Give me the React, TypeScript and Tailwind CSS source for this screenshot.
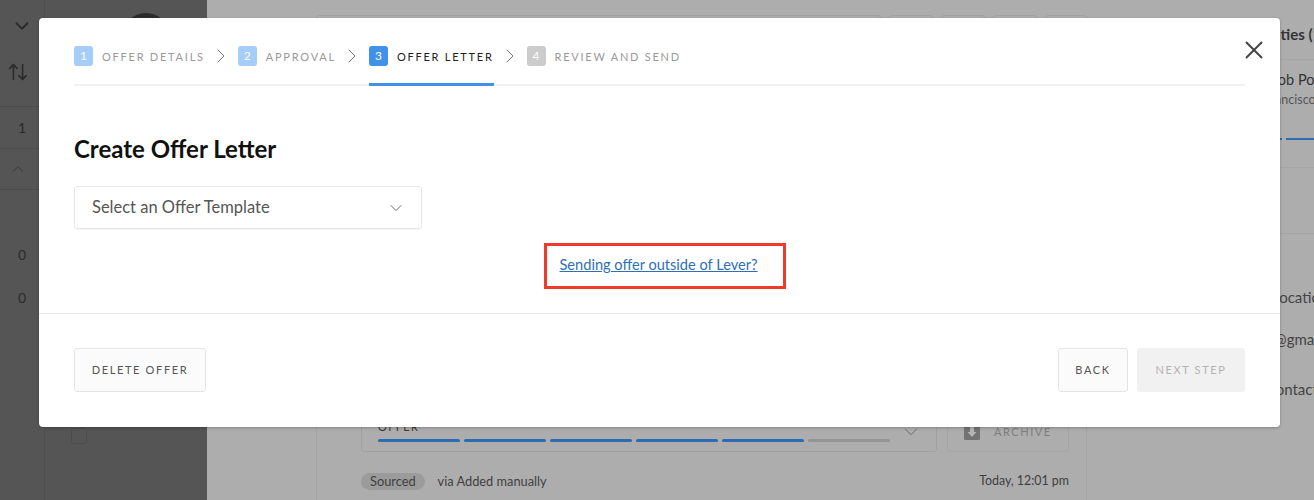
import { ArrowUpDown, ChevronDown, ChevronRight, ChevronUp, X } from 'lucide-react'

const STEPS = [
  { n: 1, label: 'Offer details', badge: 'bg-[#a5cdf9] text-white', text: 'text-[#999]' },
  { n: 2, label: 'Approval', badge: 'bg-[#a5cdf9] text-white', text: 'text-[#999]' },
  { n: 3, label: 'Offer letter', badge: 'bg-[#4190ea] text-white', text: 'text-[#222]', active: true },
  { n: 4, label: 'Review and send', badge: 'bg-[#cccccc] text-white', text: 'text-[#999]' },
]

function LeftRail() {
  return (
    <div className="flex w-[207px] flex-none bg-[#555555] text-[#2b2b2b]">
      <div className="flex w-[45px] flex-none flex-col border-r border-[#4f4f4f]">
        <div className="flex h-[50px] items-start justify-center pt-[15px] pl-0">
          <ChevronDown size={22} strokeWidth={2} />
        </div>
        <div className="flex h-[57px] items-start border-b border-[#4d4d4d] pt-[11px] pl-[7px]">
          <ArrowUpDown size={22} strokeWidth={1.8} />
        </div>
        <div className="flex h-[42px] items-center justify-end border-b border-[#4d4d4d] pr-[18px] text-[14px]">1</div>
        <div className="flex h-[41px] items-center justify-center border-b border-[#4d4d4d] pr-[9px] text-[#444]">
          <ChevronUp size={18} strokeWidth={1.5} />
        </div>
        <div className="h-[43px]" />
        <div className="flex h-[43px] items-center justify-end pr-[18px] text-[14px]">0</div>
        <div className="flex h-[43px] items-center justify-end pr-[18px] text-[14px]">0</div>
      </div>
      <div className="flex flex-1 flex-col justify-between pb-[56px]">
        <div className="ml-[77px] mt-[13px] h-[48px] w-[48px] rounded-full bg-[#2c2c2c]" />
        <div className="ml-[26px] h-[16px] w-[16px] rounded-[3px] border border-[#4c4c4c]" />
      </div>
    </div>
  )
}

function MainColumn() {
  return (
    <div className="flex flex-1 flex-col justify-between pl-[109px] pb-0 pt-[15px]">
      <div className="flex h-[30px] gap-[8px] pr-0">
        <div className="flex-1 rounded-t-[3px] border border-[#a2a2a2]" />
        <div className="w-[44px] rounded-t-[3px] border border-[#a2a2a2]" />
        <div className="w-[44px] rounded-t-[3px] border border-[#a2a2a2]" />
        <div className="w-[44px] rounded-t-[3px] border border-[#a2a2a2]" />
        <div className="w-[42px] rounded-t-[3px] border border-[#a2a2a2]" />
      </div>
      <div className="border-x border-[#a4a4a4] pl-[44px] pr-[17px] pb-[9px]">
        <div className="flex gap-[10px]">
          <div className="flex h-[52px] flex-1 items-end rounded-[3px] border border-[#a1a1a1] pl-[16px] pr-[16px] pb-[9px]">
            <div className="flex-1">
              <div className="mb-[7px] text-[11px] leading-none tracking-[0.12em] text-[#3a3a3a]">OFFER</div>
              <div className="flex gap-[4px]">
                {[0, 1, 2, 3, 4].map(i => (
                  <div key={i} className="h-[3px] flex-1 rounded-full bg-[#2d6cb0]" />
                ))}
                <div className="h-[3px] flex-1 rounded-full bg-[#949494]" />
              </div>
            </div>
            <ChevronDown size={22} strokeWidth={1} className="mb-[-1px] ml-[10px] mr-[-2px] text-[#666]" />
          </div>
          <div className="flex h-[52px] w-[122px] items-center gap-[14px] rounded-[3px] border border-[#a5a5a5] pl-[16px] pt-[12px]">
            <svg width="16" height="16" viewBox="0 0 16 16" className="flex-none">
              <rect width="16" height="16" rx="1.5" fill="#737373" />
              <path d="M6 3h4v5h2.500L8 13 3.500 8H6z" fill="#b5b5b5" />
            </svg>
            <span className="text-[11px] tracking-[0.14em] text-[#7e7e7e]">ARCHIVE</span>
          </div>
        </div>
        <div className="mt-[20px] flex items-center text-[12.8px] text-[#3f3f3f]">
          <span className="rounded-full bg-[#9b9b9b] px-[9px] py-[1px] leading-[15px]">Sourced</span>
          <span className="ml-[13px]">via Added manually</span>
          <span className="ml-auto text-[12.4px]">Today, 12:01 pm</span>
        </div>
      </div>
    </div>
  )
}

function RightPanel() {
  return (
    <div className="w-[227px] flex-none overflow-hidden text-[#333]">
      <div className="pl-[124px] pt-[25px] text-[15px] font-bold leading-[18px] whitespace-nowrap">Opportunities (1)</div>
      <div className="mt-[16px] border-t border-[#a4a4a4] pl-[185px] pt-[10px] whitespace-nowrap">
        <div className="text-[14.5px] leading-[20px]">Job Posting</div>
        <div className="-ml-[31px] text-[12.5px] leading-[20px] text-[#555]">San Francisco</div>
      </div>
      <div className="mt-[28px] flex gap-[4px] pl-[118px]">
        <div className="h-[2px] w-[77px] bg-[#2d6cb0]" />
        <div className="h-[2px] flex-1 bg-[#2d6cb0]" />
      </div>
      <div className="mt-[27px] h-[67px] border-y border-[#a4a4a4]" />
      <div className="flex flex-col gap-[24px] pl-[151px] pt-[54px] text-[15px] leading-[18px] whitespace-nowrap text-[#444]">
        <div className="ml-[34px]">Location</div>
        <div className="mr-[0px]">name@gmail.com</div>
        <div className="mt-[8px]">Add contact</div>
      </div>
    </div>
  )
}

function OfferModal() {
  return (
    <div className="absolute left-[39px] top-[18px] flex h-[409px] w-[1241px] flex-col rounded-[4px] bg-white shadow-[0_1px_3px_rgba(0,0,0,0.25)]">
      <button className="absolute right-[11px] top-[17px] text-[#444]">
        <X size={30} strokeWidth={1.5} />
      </button>

      <div className="mx-[35px] mt-[28px] flex h-[40px] items-start border-b-2 border-[#f1f1f1]">
        {STEPS.map((s, i) => (
          <div key={s.n} className="flex items-start">
            <div className={`flex h-[40px] items-start gap-[9px] ${s.active ? 'border-b-[3px] border-[#4190ea]' : ''}`}>
              <span className={`flex h-[20px] w-[19px] items-center justify-center rounded-[3px] text-[12px] ${s.badge}`}>{s.n}</span>
              <span className={`text-[11px] uppercase leading-[22px] tracking-[0.16em] whitespace-nowrap ${s.text}`}>{s.label}</span>
            </div>
            {i < STEPS.length - 1 && (
              <ChevronRight size={24} strokeWidth={1} className="mx-[4.5px] mt-[-2px] text-[#777]" />
            )}
          </div>
        ))}
      </div>

      <h1 className="mx-[35px] mt-[46px] text-[24px] font-bold leading-[34px] text-[#111]">Create Offer Letter</h1>

      <div className="mx-[35px] mt-[20px] flex h-[43px] w-[348px] items-center justify-between rounded-[3px] border border-[#e8e8e8] pl-[17px] pr-[15px] text-[16.5px] text-[#555] shadow-[0_1px_1px_rgba(0,0,0,0.05)]">
        <span>Select an Offer Template</span>
        <ChevronDown size={20} strokeWidth={1} className="text-[#555]" />
      </div>

      <div className="mt-[14px] flex justify-center pl-[10px]">
        <div className="flex h-[46px] w-[242px] items-center border-[3px] border-[#ee3b2b] pb-[3px] pl-[13px]">
          <a href="#" className="text-[14.6px] whitespace-nowrap text-[#2f6fb5] underline">Sending offer outside of Lever?</a>
        </div>
      </div>

      <div className="mt-[24px] flex flex-1 items-start justify-between border-t border-[#e6e6e6] px-[35px] pt-[34px]">
        <button className="h-[44px] w-[132px] rounded-[3px] border border-[#e4e4e4] bg-[#fbfbfb] text-[11px] tracking-[0.15em] text-[#555]">DELETE OFFER</button>
        <div className="flex gap-[9px]">
          <button className="h-[44px] w-[70px] rounded-[3px] border border-[#e4e4e4] bg-[#fbfbfb] text-[11px] tracking-[0.15em] text-[#555]">BACK</button>
          <button className="h-[44px] w-[108px] rounded-[3px] bg-[#f1f1f1] text-[11px] tracking-[0.15em] text-[#b3b3b3]">NEXT STEP</button>
        </div>
      </div>
    </div>
  )
}

export default function App() {
  return (
    <div className="relative flex h-[500px] w-[1314px] overflow-hidden bg-[#adadad] font-['Lato','Noto_Sans',sans-serif]">
      <LeftRail />
      <MainColumn />
      <RightPanel />
      <OfferModal />
    </div>
  )
}
